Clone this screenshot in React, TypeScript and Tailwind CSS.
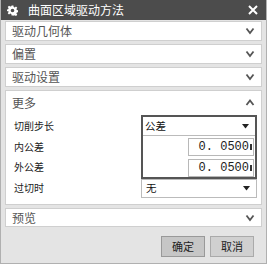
import React from "react";

const font = { fontFamily: '"Noto Sans CJK SC", "Noto Sans", sans-serif' };

function ChevDown() {
  return (
    <svg width="10" height="8" viewBox="0 0 10 8" className="shrink-0">
      <path d="M1.5 1.5 L5 6 L8.5 1.5" fill="none" stroke="#555" strokeWidth="1.8" />
    </svg>
  );
}
function ChevUp() {
  return (
    <svg width="10" height="8" viewBox="0 0 10 8" className="shrink-0">
      <path d="M1.5 6 L5 1.5 L8.5 6" fill="none" stroke="#555" strokeWidth="1.8" />
    </svg>
  );
}
function Tri() {
  return (
    <svg width="7" height="5" viewBox="0 0 7 5">
      <path d="M0 0 H7 L3.5 4.5 Z" fill="#222" />
    </svg>
  );
}

function Section({ title, h }: { title: string; h: string }) {
  return (
    <div className={`${h} bg-white border border-[#cfcfcf] flex items-center justify-between pl-[6px] pr-[6px]`}>
      <span className="text-[12px] text-[#555] leading-none">{title}</span>
      <ChevDown />
    </div>
  );
}

function ValueBox() {
  return (
    <div className="w-[66px] h-[18px] border border-[#b8b8b8] bg-white overflow-hidden flex items-center justify-end pr-[1px]">
      <span
        className="text-[12px] text-[#222] leading-none whitespace-nowrap"
        style={{ fontFamily: '"Liberation Mono", monospace' }}
      >
        0. 0500
      </span>
      <div className="w-[2px] h-[6px] bg-[#333] ml-[1px]" />
    </div>
  );
}

export default function App() {
  return (
    <div style={font} className="w-[267px] h-[264px] bg-[#e4e4e4] border-l border-r border-b border-[#b0b0b0] flex flex-col overflow-hidden">
      <div className="h-[20px] bg-[#4c4c4c] flex items-center pl-[6px] pr-[8px] shrink-0">
        <svg width="11" height="11" viewBox="0 0 24 24">
          <path
            fill="#fff"
            d="M10 1h4l.6 3.2 2.3 1 2.7-1.9 2.8 2.8-1.9 2.7 1 2.3 3.2.6v4l-3.2.6-1 2.3 1.9 2.7-2.8 2.8-2.7-1.9-2.3 1L14 23h-4l-.6-3.2-2.3-1-2.7 1.9-2.8-2.8 1.9-2.7-1-2.3L-.7 14v-4l3.2-.6 1-2.3-1.9-2.7 2.8-2.8 2.7 1.9 2.3-1z M12 8a4 4 0 1 0 0 8a4 4 0 1 0 0-8z"
            fillRule="evenodd"
          />
        </svg>
        <span className="ml-[10px] text-[12px] text-white leading-none">曲面区域驱动方法</span>
        <div className="flex-1" />
        <svg width="10" height="10" viewBox="0 0 10 10">
          <path d="M1 1 L9 9 M9 1 L1 9" stroke="#fff" strokeWidth="2" />
        </svg>
      </div>
      <div className="flex flex-col px-[4px] pt-[1px] gap-[3px]">
        <Section title="驱动几何体" h="h-[20px]" />
        <Section title="偏置" h="h-[20px]" />
        <Section title="驱动设置" h="h-[20px]" />
        <div className="bg-white border border-[#cfcfcf] h-[115px] flex flex-col">
          <div className="h-[24px] flex items-center justify-between pl-[6px] pr-[6px]">
            <span className="text-[12px] text-[#555] leading-none">更多</span>
            <ChevUp />
          </div>
          <div className="flex pl-[8px]">
            <div className="w-[127px] flex flex-col text-[10px] text-[#222] leading-none">
              <div className="h-[22px] flex items-center">切削步长</div>
              <div className="h-[20px] flex items-center">内公差</div>
              <div className="h-[20px] flex items-center">外公差</div>
              <div className="h-[21px] flex items-center">过切时</div>
            </div>
            <div className="w-[116px] flex flex-col">
              <div className="border-2 border-[#555] h-[64px] flex flex-col">
                <div className="h-[19px] flex items-center justify-between pl-[2px] pr-[6px] border-b border-[#bbb]">
                  <span className="text-[10.5px] text-[#111] leading-none">公差</span>
                  <Tri />
                </div>
                <div className="flex flex-col items-end pt-[2px] pr-[1px] gap-[3px]">
                  <ValueBox />
                  <ValueBox />
                </div>
              </div>
              <div className="h-[19px] border border-[#bbb] flex items-center justify-between pl-[4px] pr-[6px]">
                <span className="text-[10.5px] text-[#111] leading-none">无</span>
                <Tri />
              </div>
            </div>
          </div>
        </div>
        <div className="h-[19px] bg-white border border-[#cfcfcf] flex items-center justify-between pl-[6px] pr-[6px]">
          <span className="text-[12px] text-[#555] leading-none">预览</span>
          <ChevDown />
        </div>
      </div>
      <div className="flex justify-end gap-[5px] pr-[12px] mt-[9px]">
        <button className="w-[44px] h-[21px] bg-[#c6c6c6] border border-[#999] text-[11px] text-[#222] leading-none">确定</button>
        <button className="w-[44px] h-[21px] bg-[#d0d0d0] border border-[#aaa] text-[11px] text-[#222] leading-none">取消</button>
      </div>
    </div>
  );
}
